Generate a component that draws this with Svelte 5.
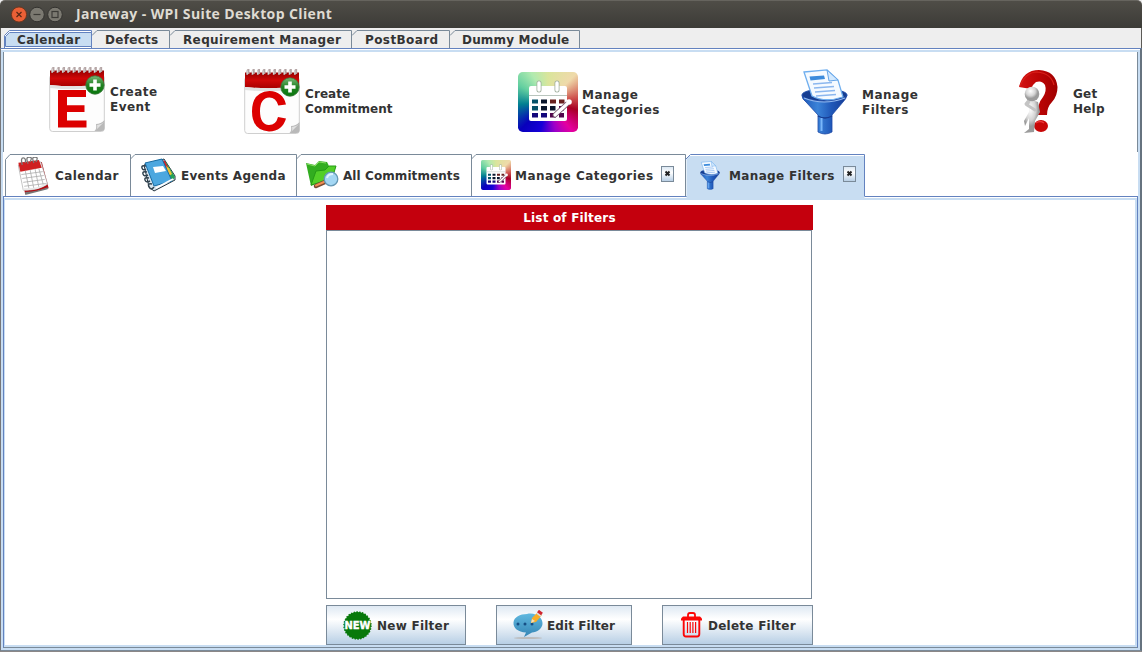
<script>
  const modules = [
    { name: 'Calendar', w: 88, pad: 13, selected: true, track: 0.42 },
    { name: 'Defects', w: 78, pad: 13, track: 0.3 },
    { name: 'Requirement Manager', w: 182, pad: 13, track: 0.38 },
    { name: 'PostBoard', w: 98, pad: 13, track: 0.4 },
    { name: 'Dummy Module', w: 130, pad: 12, track: 0.18 }
  ];
  const actions = [
    { icon: 'E', lines: ['Create', 'Event'], gap: 5, top: 15, caption: 33, track: 0.45 },
    { icon: 'C', lines: ['Create', 'Commitment'], gap: 5, top: 17, caption: 35, track: 0.08 },
    { icon: 'palette', lines: ['Manage', 'Categories'], gap: 4, top: 20, caption: 36, track: 0.5 },
    { icon: 'funnel', lines: ['Manage', 'Filters'], gap: 14, top: 17, caption: 36, track: 0.5 },
    { icon: 'help', lines: ['Get', 'Help'], gap: 14, top: 17, caption: 35, track: 0.2 }
  ];
  const views = [
    { icon: 'calendar', name: 'Calendar', w: 125, pad: 12, gap: 5, track: 0.45 },
    { icon: 'agenda', name: 'Events Agenda', w: 166, pad: 11, gap: 5, track: 0.3 },
    { icon: 'folder', name: 'All Commitments', w: 175, pad: 9, gap: 3, track: 0.08, shift: 1 },
    { icon: 'palette', name: 'Manage Categories', w: 214, pad: 10, gap: 4, track: 0.47, closable: true },
    { icon: 'funnel', name: 'Manage Filters', w: 181, pad: 15, gap: 9, track: 0.35, closable: true, pull: -1, selected: true }
  ];
  const commands = [
    { icon: 'new', name: 'New Filter' },
    { icon: 'edit', name: 'Edit Filter' },
    { icon: 'trash', name: 'Delete Filter' }
  ];
  const rings = [0, 1, 2, 3, 4, 5, 6, 7, 8, 9];
</script>

{#snippet pad(letter)}
  <svg width="56" height="66" viewBox="0 0 56 66">
    <rect x=".7" y="8" width="54.6" height="56.5" rx="3" fill="#fdfdfd" stroke="#cfcfcf" />
    <path d="M1 3.5H55V17Q28 21 1 18Z" fill="url(#redband)" />
    <path d="M1 18Q28 21 55 17V20Q28 24 1 21Z" fill="#e2e2e2" />
    {#each rings as r}
      <path d="M{3.2 + r * 5.3} 6V2.5q.3-1.8 1.4-1.8V5" fill="none" stroke="#b5a5a5" stroke-width="1.7" />
      <path d="M{3.2 + r * 5.3} 1.500V5" stroke="#eee" stroke-width=".8" />
    {/each}
    <path d="M45.500 64q2.500-2 1.500-7 5 0 8.500-4V62Q55 64 53 64Z" fill="#b9b9b9" />
    <path d="M46 64q3-2 2-6 4 0 7-3Z" fill="#e2e2e2" />
    {#if letter === 'E'}
      <path d="M9 23H37V30H18V38.2H35.5V45H18V53.5H37.5V60.500H9Z" fill="#dc0000" />
    {:else}
      <path d="M42 35.5L34.3 36.5Q32 28.5 25.3 28.5 16 29 16 42 16 55.5 25 56 32 56 34 48L42 49.5Q38.5 62 25 62.5 8 61 8 42.5 8 23 25.5 22 39 22.5 42 35.5Z" fill="#dc0000" />
    {/if}
    <circle cx="46" cy="18" r="9.2" fill="url(#greenball)" stroke="#3f793f" stroke-width=".8" />
    <path d="M46 12.5V23.5M40.5 18H51.5" stroke="#fff" stroke-width="3.6" />
  </svg>
{/snippet}

{#snippet palette(size)}
  <div class="palette" style="width:{size}px;height:{size}px">
    <svg width={size} height={size} viewBox="0 0 60 60">
      <rect x="11" y="14" width="38" height="35" rx="2" fill="#fff" />
      <path d="M11 23.5H49" stroke="#b9c5bd" stroke-width="1" />
      <path d="M21 11V18M39 11V18" stroke="#9fae9c" stroke-width="5" stroke-linecap="round" />
      <path d="M21 11V18M39 11V18" stroke="#fff" stroke-width="3.4" stroke-linecap="round" />
      <path d="M14 27.5h6v4h-6ZM14 34h6v4.500h-6Z" fill="#075268" />
      <path d="M23 27.500h6v4h-6ZM23 34h6v4.500h-6ZM32 34h5.500v4.500h-5.500Z" fill="#08152b" />
      <path d="M32 27.500h6v4h-6ZM41 27.500h5.500v4h-5.500Z" fill="#68211f" />
      <path d="M14 41h6v4.500h-6ZM23 41h6v4.500h-6Z" fill="#13077b" />
      <path d="M32 41h6v4.500h-6ZM41 41h5v4.500h-5ZM41 34h5v4.500h-5Z" fill="#51064c" />
      <path d="M37 43L49 32" stroke="#74556b" stroke-width="5" stroke-linecap="round" />
      <path d="M37 43L49 32" stroke="#fff" stroke-width="3.2" stroke-linecap="round" />
      <circle cx="51" cy="30" r="2.800" fill="#fff" />
    </svg>
  </div>
{/snippet}

{#snippet funnel(w, h)}
  <svg width={w} height={h} viewBox="0 0 47 66" preserveAspectRatio="none">
    <ellipse cx="23.500" cy="26" rx="22.500" ry="6" fill="#163d91" stroke="#204daa" />
    <path d="M3 3L26 .8 37 11 42 28Q24 34 11 27Z" fill="#f5faff" stroke="#70afef" stroke-width="1.300" />
    <path d="M26 1L28 12 37 11Z" fill="#d2e9ff" stroke="#65a5e8" />
    <path d="M8.500 7.500L23 6.500 24 10 9.500 11.500Z" fill="#3c8bdc" />
    <path d="M12 15L31 13.500M13 19L33 17.500M14 23L34 21.500M15 27L35 25.500" stroke="#8bb7ef" stroke-width="1.600" />
    <path d="M1 26.500Q4 32 23 32.500 43 32 46 26.500 45 30 42 33L31 46V63Q24 67 17 63V46L5 33Q1 30 1 26.500Z" fill="url(#bluecone)" stroke="#1c48a5" stroke-width=".8" />
    <path d="M3 29Q23 37 44 29" fill="none" stroke="#91b8ef" stroke-width="1.200" />
    <path d="M17 47Q24 51 31 47" fill="none" stroke="#173b91" stroke-width="1.300" />
    <path d="M20.500 49V62" stroke="#7ab7fa" stroke-width="2" />
  </svg>
{/snippet}

{#snippet icon(name)}
  {#if name === 'calendar'}
    <svg width="33" height="39" viewBox="0 0 33 40">
      <path d="M1 8L8 38 32 32 31 28 25 5Z" fill="#b30b12" />
      <path d="M1 9L24 5 31 28Q19 35 6 34Z" fill="#fff" stroke="#aaa" stroke-width=".7" />
      <path d="M1 6L22 3 25 11 3 15Z" fill="#cf2021" />
      <path d="M4 18L26 15M5 22L27 19M6 26L28 23M7 30L30 27M8 14L12 33M13 13L17 33M18 12L22 31M22 12L27 30" stroke="#aaa" stroke-width=".8" />
      <path d="M8 36Q21 35 31 31V33L8 39Z" fill="#777" />
      <path d="M6 33Q20 34 29 28" fill="none" stroke="#e8e8e8" stroke-width="2" />
      <path d="M5 8Q3 1 6 1T8 6M11 7Q8 0 12 0T13 5M17 6Q14 0 18 0T19 5" fill="none" stroke="#777" stroke-width="1.300" />
    </svg>
  {:else if name === 'agenda'}
    <svg width="35" height="34" viewBox="0 0 35 34">
      <path d="M3 7L23 1 34 18 34 22 13 33 8 29Z" fill="#d7e4ee" stroke="#26333d" />
      <path d="M22 3L25 4 34 19 31 23Z" fill="#26a356" />
      <path d="M21 2L24 3 27 9 25 11Z" fill="#d92028" /><path d="M25 8L28 10 31 16 28 18Z" fill="#efc234" />
      <path d="M4 5L21 1 31 23 13 28Z" fill="#4ca7df" stroke="#176ba2" />
      <path d="M12 9L22 8 25 13 14 15Z" fill="#fff" />
      <path d="M15 30L32 21" stroke="#fff" stroke-width="1.500" />
      <path d="M5 8Q0 7 1 10T5 11M6 14Q1 13 2 16T7 17M8 20Q3 19 4 22T9 23M11 26Q6 25 8 29T13 29" fill="none" stroke="#31434f" stroke-width="1.400" />
    </svg>
  {:else if name === 'folder'}
    <svg width="34" height="30" viewBox="0 0 34 30">
      <path d="M1 3L10 5 14 1 22 2 24 6 21 19 6 26Z" fill="#32ad20" />
      <path d="M6 25L11 11 20 10 24 6 31 6 27 19Z" fill="#52cf28" stroke="#259b16" />
      <path d="M2 4L10 6 14 2 21 3" stroke="#87dc61" fill="none" />
      <path d="M11 26L20 22" stroke="#784a32" stroke-width="4.500" stroke-linecap="round" />
      <path d="M11 25.500L19 22" stroke="#ef8d53" stroke-width="2" stroke-linecap="round" />
      <circle cx="26" cy="19" r="6.800" fill="#a4d7f4" stroke="#6598b5" stroke-width="1.300" />
      <path d="M22 18Q23 14 28 14" stroke="#e1f4ff" stroke-width="2" fill="none" />
    </svg>
  {:else if name === 'palette'}
    {@render palette(30)}
  {:else if name === 'funnel'}
    {@render funnel(20, 29)}
  {:else if name === 'new'}
    <svg width="29" height="29" viewBox="0 0 29 29">
      <circle cx="14.500" cy="14.500" r="13.400" fill="#08790b" stroke="#08790b" stroke-width="1.600" stroke-dasharray="1.500 1.300" />
      <text x="14.500" y="18.300" text-anchor="middle" textLength="26" lengthAdjust="spacingAndGlyphs" class="badge">NEW</text>
    </svg>
  {:else if name === 'edit'}
    <svg width="30" height="30" viewBox="0 0 30 30">
      <ellipse cx="15" cy="28" rx="14" ry="1.100" fill="#bbb" />
      <path d="M14 4C23 2 30 8 29.500 14 29 19 24 22 19 22.500L11 27 13 22.500C5 22 0 18 .500 12.500 1 7 7 4 14 4Z" fill="url(#bubble)" />
      <circle cx="5" cy="14" r="1.500" fill="#164f85" /><circle cx="12" cy="14" r="1.500" fill="#164f85" /><circle cx="19" cy="14" r="1.500" fill="#164f85" />
      <path d="M18 13L19 8 25 2 29 5 23 12Z" fill="#f8ad27" /><path d="M18 13L19 9 22 11Z" fill="#f6dfbb" />
      <path d="M24 3L28 6" stroke="#ddd" stroke-width="2" /><path d="M25 1L29 4" stroke="#cf2530" stroke-width="3" />
    </svg>
  {:else}
    <svg width="21" height="26" viewBox="0 0 21 26">
      <path d="M7 5V3Q7 1 9 1H12Q14 1 14 3V5" fill="none" stroke="#fb0707" stroke-width="1.800" />
      <path d="M0 8.500V6.500L2 4.500H19L21 6.500V8.500Z" fill="#fb0707" />
      <path d="M2.700 8V22Q2.700 24.500 5 24.500H16Q18.300 24.500 18.300 22V8" fill="none" stroke="#fb0707" stroke-width="1.900" />
      <path d="M6.500 10V21M9.200 10V21M11.900 10V21M14.600 10V21" stroke="#fb0707" stroke-width="1.200" />
    </svg>
  {/if}
{/snippet}

<svg class="defs" width="0" height="0">
  <defs>
    <linearGradient id="redband" x1="0" y1="0" x2="0" y2="1"><stop stop-color="#960000" /><stop offset=".5" stop-color="#d00808" /><stop offset="1" stop-color="#a80000" /></linearGradient>
    <linearGradient id="greenball" x1="0" y1="0" x2="0" y2="1"><stop stop-color="#79b879" /><stop offset=".5" stop-color="#208122" /><stop offset="1" stop-color="#08770c" /></linearGradient>
    <linearGradient id="bluecone"><stop stop-color="#1d57b7" /><stop offset=".35" stop-color="#3b83d8" /><stop offset=".65" stop-color="#2058b9" /><stop offset="1" stop-color="#153a94" /></linearGradient>
    <linearGradient id="bubble" x1="0" y1="0" x2="0" y2="1"><stop stop-color="#60b8df" /><stop offset="1" stop-color="#3485b5" /></linearGradient>
    <linearGradient id="mark"><stop stop-color="#d21313" /><stop offset=".5" stop-color="#bd0505" /><stop offset="1" stop-color="#a00000" /></linearGradient>
    <radialGradient id="figure" cx=".4" cy=".3"><stop stop-color="#fff" /><stop offset=".65" stop-color="#d4d4d4" /><stop offset="1" stop-color="#9b9b9b" /></radialGradient>
  </defs>
</svg>

<div class="window">
  <header>
    <svg width="58" height="20" viewBox="0 0 58 20">
      <circle cx="9" cy="9.500" r="7.600" fill="#ea6036" stroke="#69361f" /><path d="M6.500 7L11.500 12M11.500 7L6.500 12" stroke="#582816" stroke-width="1.200" />
      <circle cx="27" cy="9.500" r="7.300" fill="#7b7971" stroke="#33322f" /><path d="M23.500 9.500H30.500" stroke="#3c3b37" stroke-width="1.200" />
      <circle cx="45" cy="9.500" r="7.300" fill="#7b7971" stroke="#33322f" /><rect x="42" y="6.500" width="6" height="6" fill="none" stroke="#3c3b37" stroke-width="1.200" />
    </svg>
    <span>Janeway - WPI Suite Desktop Client</span>
  </header>
  <nav class="modules">
    {#each modules as m}
      <div class="module" style="width:{m.w}px;padding-left:{m.pad}px;letter-spacing:{m.track}px">
        <svg class="shape" width={m.w + 1} height="20">
          {#if m.selected}
            <path d="M.5 18V5.500L5.500.5H87.500V18" fill="#fff" stroke="#6382bf" />
            <path d="M1.500 16.500V6.500L5.500 2.500H87.500V16.500Z" fill="#c8ddf2" stroke="#6382bf" />
          {:else}
            <path d="M0 5.500L5 .5H{m.w - 0.5}V18" fill="none" stroke="#7a8a99" />
          {/if}
        </svg>
        <span>{m.name}</span>
      </div>
    {/each}
  </nav>
  <main>
    <section class="toolbar">
      {#each actions as a}
        <div class="action" style="gap:{a.gap}px">
          <div class="picture" style="margin-top:{a.top}px">
            {#if a.icon === 'palette'}
              {@render palette(60)}
            {:else if a.icon === 'funnel'}
              {@render funnel(47, 66)}
            {:else if a.icon === 'help'}
              <svg width="40" height="65" viewBox="0 0 40 65">
                <path d="M0 18Q4 1 20 1 37 2 38.500 18 38.500 27 33 33 28 38 28 46H19Q18 35 24 28 28 22 26 16 23 11 17 13 14 15 12 20Z" fill="url(#mark)" />
                <path d="M1 17Q7 3 18 3 32 4 35 16" fill="none" stroke="#d9211b" stroke-width="1.200" />
                <ellipse cx="22" cy="57" rx="7" ry="6" fill="#c80707" /><path d="M17 54Q21 51 25 54" stroke="#ea3838" stroke-width="1.500" fill="none" />
                <path d="M10 30L19 33 21 43 16 52 15 63 5 64 10 60 10 49 6 57 5 52 10 43Z" fill="url(#figure)" />
                <path d="M10 32L8 36 16 41M11 30L7 35" stroke="#c4c4c4" stroke-width="3" fill="none" stroke-linecap="round" />
                <circle cx="13" cy="25" r="7.300" fill="url(#figure)" />
              </svg>
            {:else}
              {@render pad(a.icon)}
            {/if}
          </div>
          <div class="caption" style="margin-top:{a.caption}px;letter-spacing:{a.track}px">
            {#each a.lines as line}<div>{line}</div>{/each}
          </div>
        </div>
      {/each}
    </section>
    <nav class="views">
      {#each views as v}
        <div class="view" style="width:{v.w}px;padding-left:{v.pad}px;gap:{v.gap}px;letter-spacing:{v.track}px">
          <svg class="shape" width={v.w + 1} height="46">
            {#if v.selected}
              <path d="M1.500 45V5L5.500 1H179.500V45Z" fill="#c8ddf2" />
              <path d="M.5 5.500L5.500.5H179.500V42" fill="none" stroke="#6382bf" />
              <path d="M5 1.500H179" stroke="#fff" />
            {:else}
              <path d="M{v.icon === 'calendar' ? '.5 42V' : '0 '}5.500L5 .5H{v.w + 0.5}V42" fill="none" stroke="#7a8a99" />
            {/if}
          </svg>
          <div class="mini {v.icon}">{@render icon(v.icon)}</div>
          <span class="label" style="margin-left:{v.shift ?? 0}px">{v.name}</span>
          {#if v.closable}
            <button class="close" style="margin-left:{v.pull ?? 3}px" aria-label="Close"><svg width="7" height="7"><path d="M1.500 1.500L5.500 5.500M5.500 1.500L1.500 5.500" stroke="#222" stroke-width="2" /></svg></button>
          {/if}
        </div>
      {/each}
    </nav>
    <section class="content">
      <div class="filters">
        <h1>List of Filters</h1>
        <div class="list"></div>
        <div class="commands">
          {#each commands as c}
            <button class="command {c.icon}">{@render icon(c.icon)}<span class="label">{c.name}</span></button>
          {/each}
        </div>
      </div>
    </section>
  </main>
</div>

<style>
  :global(body) { background: #fff; overflow: hidden; }
  .defs { position: absolute; }
  svg { display: block; flex: none; }
  .window { box-sizing: border-box; width: 1142px; height: 652px; display: flex; flex-direction: column; background: #eee; font: bold 12px/15px "DejaVu Sans", sans-serif; letter-spacing: .3px; color: #333; border-bottom: 1px solid #8b8787; }
  header { height: 28px; box-sizing: border-box; display: flex; align-items: center; padding-left: 10px; gap: 8px; background: linear-gradient(#4f4d47, #3c3b37); border-top: 1px solid #66645e; border-radius: 5px 5px 0 0; color: #dfdbd2; font: bold 14px/20px "Open Sans", sans-serif; letter-spacing: .39px; }
  header span { margin-bottom: 2px; }
  .modules { height: 20px; display: flex; border-left: 1px solid #5c5b57; border-right: 1px solid #5c5b57; box-sizing: border-box; padding-left: 3px; }
  .module { position: relative; box-sizing: border-box; height: 20px; padding-top: 5px; white-space: nowrap; }
  .module span { position: relative; }
  .shape { position: absolute; left: 0; top: 2px; }
  main { height: 603px; box-sizing: border-box; display: flex; flex-direction: column; background: #fff; border: 1px solid #6382bf; border-left-color: #77777a; border-right: 2px solid #66737f; border-bottom-color: #7a8a99; box-shadow: inset 0 1px #fff, inset 2px 0 #c8ddf2, inset -2px 0 #c8ddf2, inset 0 3px #c8ddf2, inset 0 -2px #c8ddf2; padding: 3px 2px 2px; }
  .toolbar { height: 100px; flex: none; box-sizing: border-box; display: grid; grid-template-columns: 195px 274px 283px 218px 1fr; padding-left: 45px; border-left: 1px solid #7a8a99; border-right: 1px solid #7a8a99; }
  .action { display: flex; align-items: flex-start; }
  .picture { flex: none; }
  .caption { white-space: nowrap; }
  .palette { border-radius: 8%; background: conic-gradient(#d9e59b, #efdaaa 45deg, #d0554f 80deg, #a80024 105deg, #e500a0 140deg, #9d00c9 165deg, #1600d8 195deg, #0800bc 225deg, #007f92 265deg, #63cfa0 300deg, #b0eab0 330deg, #d9e59b); }
  .views { height: 44px; flex: none; display: flex; padding: 2px 0 0 2px; box-sizing: border-box; }
  .view { position: relative; z-index: 1; box-sizing: border-box; display: flex; align-items: center; white-space: nowrap; height: 42px; }
  .view .shape { top: 0; }
  .mini { position: relative; }
  .mini.calendar { padding-top: 3px; }
  .label { position: relative; padding-top: 2px; }
  .close { position: relative; display: flex; align-items: center; justify-content: center; width: 13px; height: 16px; padding: 0; box-sizing: border-box; margin-top: -3px; border: 1px solid #7a8a99; background: linear-gradient(#dce8f3, #fff 40%, #b8cfe5); }
  .content { flex: 1; box-sizing: border-box; border: 1px solid #6382bf; border-bottom-color: #7a8a99; box-shadow: inset 0 1px #fff, inset 0 3px #c8ddf2, inset -2px 0 #c8ddf2, inset 1px 0 #c8ddf2, inset 0 -2px #c8ddf2; display: flex; padding: 8px 0 0 322px; }
  .filters { width: 487px; }
  h1 { margin: 0; height: 25px; box-sizing: border-box; padding-top: 1px; background: #c4000d; color: #fff; font: inherit; line-height: 25px; letter-spacing: .18px; text-align: center; }
  .list { box-sizing: border-box; width: 486px; height: 369px; border: 1px solid #7a8a99; background: #fff; }
  .commands { display: flex; justify-content: space-between; margin-top: 6px; }
  .command { display: flex; align-items: center; box-sizing: border-box; height: 40px; border: 1px solid #7a8a99; padding: 0 0 0 16px; gap: 5px; font: inherit; letter-spacing: .25px; color: #333; background: linear-gradient(#dfe9f3, #fff 35%, #b8cfe5); white-space: nowrap; }
  .new { width: 140px; }
  .edit { width: 136px; gap: 4px; letter-spacing: .08px; }
  .trash { width: 151px; padding-left: 18px; gap: 6px; }
  .badge { font: 900 10px "DejaVu Sans", sans-serif; fill: #fff; stroke: #fff; stroke-width: .4px; letter-spacing: 0; }
</style>
